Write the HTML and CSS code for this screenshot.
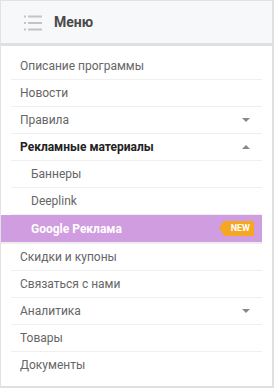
FILE: index.html
```html
<!DOCTYPE html>
<html>
<head>
<meta charset="utf-8">
<link rel="stylesheet" href="styles.css">
</head>
<body>
<div class="panel">
  <div class="head">
    <svg class="ico" width="18" height="17" viewBox="0 0 18 17">
      <rect x="0" y="1.5" width="2" height="2" fill="#c4c4c4"/>
      <rect x="4" y="1.5" width="14" height="2" fill="#c4c4c4"/>
      <rect x="0" y="8" width="2" height="2" fill="#c4c4c4"/>
      <rect x="4" y="8" width="14" height="2" fill="#c4c4c4"/>
      <rect x="0" y="14.5" width="2" height="2" fill="#c4c4c4"/>
      <rect x="4" y="14.5" width="14" height="2" fill="#c4c4c4"/>
    </svg>
    <span class="title">Меню</span>
  </div>
  <ul class="list">
    <li class="item">Описание программы</li>
    <li class="item">Новости</li>
    <li class="item">Правила<span class="caret down"></span></li>
    <li class="item bold">Рекламные материалы<span class="caret up"></span></li>
    <li class="item sub">Баннеры</li>
    <li class="item sub">Deeplink</li>
    <li class="item sub active">Google Реклама<span class="badge">NEW</span></li>
    <li class="item">Скидки и купоны</li>
    <li class="item">Связаться с нами</li>
    <li class="item">Аналитика<span class="caret down"></span></li>
    <li class="item">Товары</li>
    <li class="item last">Документы</li>
  </ul>
</div>
</body>
</html>
```
FILE: styles.css
```css
html, body { margin: 0; padding: 0; background: #fff; }
body { font-family: Roboto, "Noto Sans", Arial, sans-serif; }
.panel {
  width: 274px;
  height: 388px;
  box-sizing: border-box;
  border: 1px solid #e2e2e2;
  border-right: 2px solid #e0e0e0;
  border-bottom: 2px solid #e0e0e0;
  background: #fff;
}
.head {
  height: 42px;
  background: #f7f8fa;
  border-bottom: 3px solid #dfe0e2;
  display: flex;
  align-items: center;
  padding-left: 22px;
}
.ico { display: block; margin-right: 12px; margin-left: 1px; }
.title { font-size: 14px; font-weight: bold; color: #4a4a4a; margin-top: -1px; }
.list { list-style: none; margin: 0; padding: 7px 10px 0 10px; }
.item {
  height: 26px;
  border-bottom: 1px solid #efefef;
  display: flex;
  align-items: center;
  padding-left: 9px;
  padding-right: 12px;
  font-size: 12px;
  color: #666;
}
.item.last { border-bottom: none; }
.bold { font-weight: bold; color: #222; }
.sub { padding-left: 20px; }
.active {
  background: #cf9de0;
  color: #fff;
  font-weight: bold;
  margin-left: -10px;
  padding-left: 30px;
  border-bottom: 2px solid #ededed;
  height: 27px;
}
.caret {
  margin-left: auto;
  width: 0; height: 0;
  border-left: 4px solid transparent;
  border-right: 4px solid transparent;
}
.caret.down { border-top: 4px solid #888; }
.caret.up { border-bottom: 4px solid #888; }
.badge {
  margin-left: auto;
  margin-right: -4px;
  position: relative;
  background: #f5a623;
  color: #fff;
  font-size: 9px;
  font-weight: bold;
  height: 15px;
  line-height: 15px;
  padding: 0 4px 0 7px;
  margin-top: -1px;
}
.badge::before {
  content: "";
  position: absolute;
  left: -5px; top: 0;
  border-top: 7.5px solid transparent;
  border-bottom: 7.5px solid transparent;
  border-right: 5px solid #f5a623;
}
```
